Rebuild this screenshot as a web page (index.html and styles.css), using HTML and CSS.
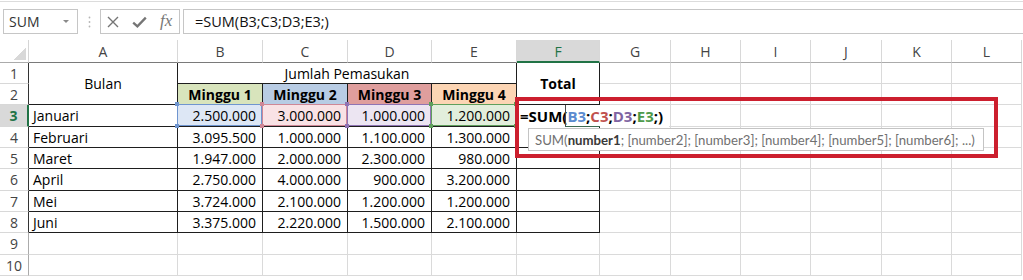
FILE: index.html
```html
<!DOCTYPE html>
<html lang="id">
<head>
    <meta charset="UTF-8">
    <title>Rumus SUM</title>
    <link rel="stylesheet" href="styles.css">
</head>
<body>
<div class="page">
    <div class="topline"></div>

    <!-- formula bar -->
    <div class="bar">
        <div class="namebox"><span>SUM</span><span class="dd"></span></div>
        <div class="grip">
            <svg width="3" height="12" viewBox="0 0 3 12"><circle cx="1.5" cy="1.5" r="0.9" fill="#b5b5b5"/><circle cx="1.5" cy="6" r="0.9" fill="#b5b5b5"/><circle cx="1.5" cy="10.5" r="0.9" fill="#b5b5b5"/></svg>
        </div>
        <div class="fbtns">
            <svg width="12" height="12" viewBox="0 0 12 12"><path d="M1 1L11 11M11 1L1 11" stroke="#757575" stroke-width="1.4" fill="none"/></svg>
            <svg width="15" height="12" viewBox="0 0 15 12"><path d="M1.2 6.6L5.4 10.3L13.8 1.6" stroke="#757575" stroke-width="2.3" fill="none"/></svg>
            <span class="fx">fx</span>
        </div>
        <div class="fbar">=SUM(B3;C3;D3;E3;)</div>
    </div>

    <!-- sheet -->
    <div class="sheet">
        <div class="corner"><div class="tri"></div></div>
        <div class="ch tt">A</div>
        <div class="ch tt">B</div>
        <div class="ch tt">C</div>
        <div class="ch tt">D</div>
        <div class="ch tt">E</div>
        <div class="ch tt sel">F</div>
        <div class="ch">G</div>
        <div class="ch">H</div>
        <div class="ch">I</div>
        <div class="ch">J</div>
        <div class="ch">K</div>
        <div class="ch">L</div>

        <div class="rh tl">1</div>
        <div class="t a12 ctr">Bulan</div>
        <div class="t b1 ctr">Jumlah Pemasukan</div>
        <div class="t f12 ctr b">Total</div>
        <div class="c"></div><div class="c"></div><div class="c"></div><div class="c"></div><div class="c"></div><div class="c"></div>

        <div class="rh tl">2</div>
        <div class="t ctr b m1">Minggu 1</div>
        <div class="t ctr b m2">Minggu 2</div>
        <div class="t ctr b m3">Minggu 3</div>
        <div class="t ctr b m4">Minggu 4</div>
        <div class="c"></div><div class="c"></div><div class="c"></div><div class="c"></div><div class="c"></div><div class="c"></div>

        <div class="rh tl sel">3</div>
        <div class="t l">Januari</div>
        <div class="t r hl hb">2.500.000</div>
        <div class="t r hl hc">3.000.000</div>
        <div class="t r hl hd">1.000.000</div>
        <div class="t r hl he">1.200.000</div>
        <div class="t edit"><span class="etext">=SUM(<span class="kb">B3</span>;<span class="kc">C3</span>;<span class="kd">D3</span>;<span class="ke">E3</span>;)</span></div>
        <div class="c"></div><div class="c"></div><div class="c"></div><div class="c"></div><div class="c"></div><div class="c"></div>

        <div class="rh tl">4</div>
        <div class="t l">Februari</div>
        <div class="t r">3.095.500</div>
        <div class="t r">1.000.000</div>
        <div class="t r">1.100.000</div>
        <div class="t r">1.300.000</div>
        <div class="t"></div>
        <div class="c"></div><div class="c"></div><div class="c"></div><div class="c"></div><div class="c"></div><div class="c"></div>

        <div class="rh tl">5</div>
        <div class="t l">Maret</div>
        <div class="t r">1.947.000</div>
        <div class="t r">2.000.000</div>
        <div class="t r">2.300.000</div>
        <div class="t r">980.000</div>
        <div class="t"></div>
        <div class="c"></div><div class="c"></div><div class="c"></div><div class="c"></div><div class="c"></div><div class="c"></div>

        <div class="rh tl">6</div>
        <div class="t l">April</div>
        <div class="t r">2.750.000</div>
        <div class="t r">4.000.000</div>
        <div class="t r">900.000</div>
        <div class="t r">3.200.000</div>
        <div class="t"></div>
        <div class="c"></div><div class="c"></div><div class="c"></div><div class="c"></div><div class="c"></div><div class="c"></div>

        <div class="rh tl">7</div>
        <div class="t l">Mei</div>
        <div class="t r">3.724.000</div>
        <div class="t r">2.100.000</div>
        <div class="t r">1.200.000</div>
        <div class="t r">1.200.000</div>
        <div class="t"></div>
        <div class="c"></div><div class="c"></div><div class="c"></div><div class="c"></div><div class="c"></div><div class="c"></div>

        <div class="rh tl">8</div>
        <div class="t l">Juni</div>
        <div class="t r">3.375.000</div>
        <div class="t r">2.220.000</div>
        <div class="t r">1.500.000</div>
        <div class="t r">2.100.000</div>
        <div class="t"></div>
        <div class="c"></div><div class="c"></div><div class="c"></div><div class="c"></div><div class="c"></div><div class="c"></div>

        <div class="rh">9</div>
        <div class="c"></div><div class="c"></div><div class="c"></div><div class="c"></div><div class="c"></div><div class="c"></div>
        <div class="c"></div><div class="c"></div><div class="c"></div><div class="c"></div><div class="c"></div><div class="c"></div>

        <div class="rh">10</div>
        <div class="c"></div><div class="c"></div><div class="c"></div><div class="c"></div><div class="c"></div><div class="c"></div>
        <div class="c"></div><div class="c"></div><div class="c"></div><div class="c"></div><div class="c"></div><div class="c"></div>
    </div>

    <!-- callout + function tooltip -->
    <div class="mark"></div>
    <div class="tip">SUM(<b>number1</b>; [number2]; [number3]; [number4]; [number5]; [number6]; ...)</div>
</div>
</body>
</html>
```

FILE: styles.css
```css
body {
    margin: 0;
    background: #fff;
    font-family: "Open Sans", Lato, sans-serif;
    color: #000;
}

.page {
    position: relative;
    width: 1023px;
    height: 280px;
    overflow: hidden;
}

.topline {
    height: 1px;
    margin-top: 1px;
    background: #dcdcdc;
}

/* formula bar */
.bar {
    display: flex;
    height: 25px;
    margin: 7px 0 0 3px;
}

.namebox {
    width: 75px;
    box-sizing: border-box;
    border: 1px solid #c6c6c6;
    display: flex;
    align-items: center;
    justify-content: space-between;
    padding: 0 8px 0 5px;
    font-size: 14px;
    color: #333;
}

.dd {
    width: 0;
    height: 0;
    border-left: 3px solid transparent;
    border-right: 3px solid transparent;
    border-top: 3px solid #8a8a8a;
}

.grip {
    width: 22px;
    display: flex;
    align-items: center;
    justify-content: center;
}

.fbtns {
    width: 80px;
    box-sizing: border-box;
    border: 1px solid #c6c6c6;
    display: flex;
    align-items: center;
    gap: 13px;
    padding-left: 6px;
}

.fx {
    font-family: "Liberation Serif", serif;
    font-style: italic;
    font-size: 17px;
    color: #777;
    margin-top: -2px;
}

.fbar {
    flex: 1;
    margin-left: 3px;
    border: 1px solid #c6c6c6;
    border-right: none;
    padding-left: 11px;
    display: flex;
    align-items: center;
    font-size: 14.5px;
    color: #111;
}

/* sheet grid */
.sheet {
    display: grid;
    margin-top: 6px;
    grid-template-columns: 29px 149px 85px 85px 84px 85px 83px 71px 70px 70px 71px 70px 70px;
    grid-template-rows: 23px 21px 21px 22px 21px 21px 22px 21px 21px 22px 21px;
    font-size: 14px;
}

.sheet > div {
    box-sizing: border-box;
    display: flex;
    align-items: center;
    white-space: nowrap;
    position: relative;
}

.corner {
    justify-content: flex-end;
    align-items: flex-end !important;
    padding: 0 2px 2px 0;
    border-right: 1px solid #d5d5d5;
    border-bottom: 1px solid #ababab;
}

.tri {
    width: 12px;
    height: 13px;
    background: linear-gradient(to bottom right, transparent 50%, #d8d8d8 50%);
}

.ch {
    justify-content: center;
    color: #444;
    border-right: 1px solid #d8d8d8;
    border-bottom: 1px solid #ababab;
    padding-top: 1px;
}

.ch.tt {
    border-bottom-color: #7a7a7a;
}

.rh {
    justify-content: center;
    color: #444;
    border-right: 1px solid #ababab;
    border-bottom: 1px solid #d8d8d8;
}

.rh.tl {
    border-right-color: #333;
}

.ch.sel {
    background: #d9d9d9;
    color: #217346;
    border-bottom: 2px solid #217346;
}

.rh.sel {
    background: #d9d9d9;
    color: #217346;
    font-weight: 700;
    border-right: 2px solid #217346;
}

.c {
    border-right: 1px solid #dadada;
    border-bottom: 1px solid #dadada;
}

.t {
    border-right: 1px solid #1e1e1e;
    border-bottom: 1px solid #1e1e1e;
}

.l { padding-left: 4px; }
.r { justify-content: flex-end; padding-right: 6px; }
.ctr { justify-content: center; }
.b { font-weight: 700; }

.a12 { grid-row: span 2; }
.f12 { grid-row: span 2; }
.b1 { grid-column: span 4; }

.m1 { background: #d8e4bc; }
.m2 { background: #b8cce4; }
.m3 { background: #df9e9d; }
.m4 { background: #fcd5b4; }

/* range highlights of the formula being typed */
.hl::after {
    content: "";
    position: absolute;
    top: -1px;
    left: -1px;
    right: 0;
    bottom: 0;
    border: 1px solid var(--hc);
}

.hl::before {
    content: "";
    position: absolute;
    top: -3px;
    left: -3px;
    width: 4px;
    height: 4px;
    background: var(--hc);
    z-index: 2;
    box-shadow: var(--w) 0 0 var(--hc), 0 22px 0 var(--hc), var(--w) 22px 0 var(--hc);
}

.hb { --hc: #6f95cf; --w: 85px; background: #dde7f5; }
.hc { --hc: #cf8796; --w: 85px; background: #f9e2e5; }
.hd { --hc: #8f74b4; --w: 84px; background: #ece5f2; }
.he { --hc: #5f9f5c; --w: 85px; background: #e2eedc; }

/* cell in edit mode */
.etext {
    position: relative;
    z-index: 1;
    background: #fff;
    font-weight: 700;
    font-size: 15px;
    padding: 1px 6px 1px 3px;
}

.edit::after {
    content: "";
    position: absolute;
    left: 48px;
    right: -1px;
    top: 0;
    bottom: -1px;
    border-left: 1px solid #4a4a4a;
    border-bottom: 1px solid #3d6b52;
    z-index: 2;
}

.kb { color: #5b8bd0; }
.kc { color: #c0504d; }
.kd { color: #8064a2; }
.ke { color: #4e9a4a; }

.mark {
    position: absolute;
    left: 515px;
    top: 97px;
    width: 483px;
    height: 61px;
    box-sizing: border-box;
    border: 4px solid #cc1f2e;
    z-index: 3;
}

.tip {
    position: absolute;
    left: 528px;
    top: 128px;
    width: 456px;
    height: 23px;
    box-sizing: border-box;
    border: 1px solid #c4c4c4;
    background: #fff;
    padding-left: 6px;
    display: flex;
    align-items: center;
    font-family: Lato, "Open Sans", sans-serif;
    font-size: 13.2px;
    color: #707070;
    white-space: nowrap;
    z-index: 4;
}

.tip b {
    color: #3a3a3a;
    font-weight: 700;
}
```
